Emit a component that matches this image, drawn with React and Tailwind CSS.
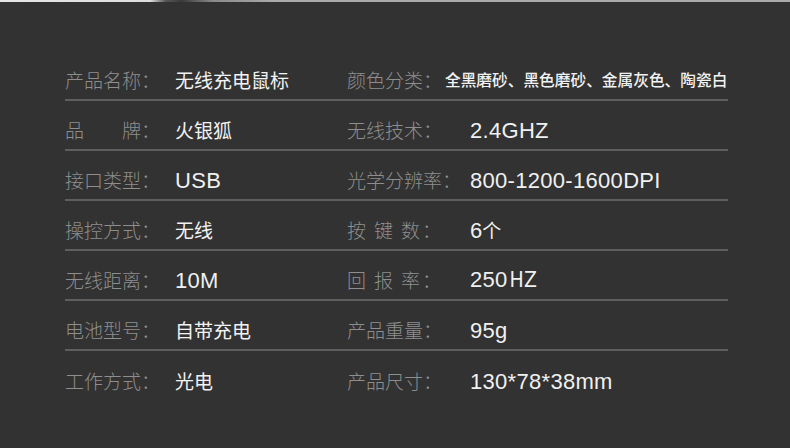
import React from "react";

const rows = [
  [
    { label: "产品名称：", value: "无线充电鼠标", zh: true },
    { label: "颜色分类：", value: "全黑磨砂、黑色磨砂、金属灰色、陶瓷白", small: true },
  ],
  [
    { label: "品\u3000\u3000牌：", value: "火银狐", zh: true },
    { label: "无线技术：", value: "2.4GHZ" },
  ],
  [
    { label: "接口类型：", value: "USB" },
    { label: "光学分辨率：", value: "800-1200-1600DPI" },
  ],
  [
    { label: "操控方式：", value: "无线", zh: true },
    { label: "按键数：", value: "6个", spaced: true, mixed: true },
  ],
  [
    { label: "无线距离：", value: "10M" },
    { label: "回报率：", value: "250HZ", spaced: true, hz: true },
  ],
  [
    { label: "电池型号：", value: "自带充电", zh: true },
    { label: "产品重量：", value: "95g" },
  ],
  [
    { label: "工作方式：", value: "光电", zh: true },
    { label: "产品尺寸：", value: "130*78*38mm" },
  ],
];

const zhFont = "[font-family:'Noto_Sans_CJK_SC',sans-serif]";

function Label({ text, spaced, width }) {
  if (spaced) {
    const chars = text.replace("：", "").split("");
    return (
      <div className={`${width} shrink-0 flex items-center text-[19px] font-light text-[#8e8e8e] ${zhFont}`}>
        {chars.map((c, i) => (
          <span key={i} className="mr-[8px]">{c}</span>
        ))}
        <span className="-ml-[6px]">：</span>
      </div>
    );
  }
  return (
    <div className={`${width} shrink-0 text-[19px] font-light text-[#8e8e8e] ${zhFont} whitespace-nowrap`}>
      {text}
    </div>
  );
}

function Value({ item }) {
  if (item.small) {
    return (
      <div className={`-ml-[25px] text-[15.7px] font-medium text-[#f2f2f2] whitespace-nowrap ${zhFont}`}>
        {item.value}
      </div>
    );
  }
  if (item.zh) {
    return (
      <div className={`text-[19px] font-normal text-[#f2f2f2] whitespace-nowrap ${zhFont}`}>
        {item.value}
      </div>
    );
  }
  if (item.mixed) {
    return (
      <div className="text-[#f0f0f0] whitespace-nowrap flex items-baseline">
        <span className="text-[22px] [font-family:'Liberation_Sans',sans-serif]">6</span>
        <span className={`text-[19px] font-normal ${zhFont}`}>个</span>
      </div>
    );
  }
  if (item.hz) {
    return (
      <div className="text-[22px] text-[#f0f0f0] whitespace-nowrap tracking-[0.3px] [font-family:'Liberation_Sans',sans-serif]">
        250<span className="ml-[2px] font-normal [font-family:'DejaVu_Sans_Condensed','Liberation_Sans',sans-serif] text-[21px]">HZ</span>
      </div>
    );
  }
  return (
    <div className="text-[22px] text-[#f0f0f0] whitespace-nowrap tracking-[0.3px] [font-family:'Liberation_Sans',sans-serif]">
      {item.value}
    </div>
  );
}

export default function App() {
  return (
    <div className="w-[790px] h-[448px] bg-[#323232] overflow-hidden">
      <div className="h-[2px] bg-[linear-gradient(90deg,#e6e6e6_0%,#dedede_19%,#555_21%,#3a3a3a_23%,#8a8a8a_27%,#ababab_35%,#aaaaaa_100%)]" />
      <div className="ml-[65px] w-[663px] pt-[49px]">
        {rows.map((row, i) => (
          <div
            key={i}
            className={`h-[50px] pt-[10px] grid grid-cols-[282px_1fr] items-center ${
              i < rows.length - 1 ? "border-b-2 border-[#5e5e5e]" : ""
            }`}
          >
            <div className="flex items-center">
              <Label text={row[0].label} width="w-[110px]" />
              <Value item={row[0]} />
            </div>
            <div className="flex items-center">
              <Label text={row[1].label} spaced={row[1].spaced} width="w-[123px]" />
              <Value item={row[1]} />
            </div>
          </div>
        ))}
      </div>
    </div>
  );
}
